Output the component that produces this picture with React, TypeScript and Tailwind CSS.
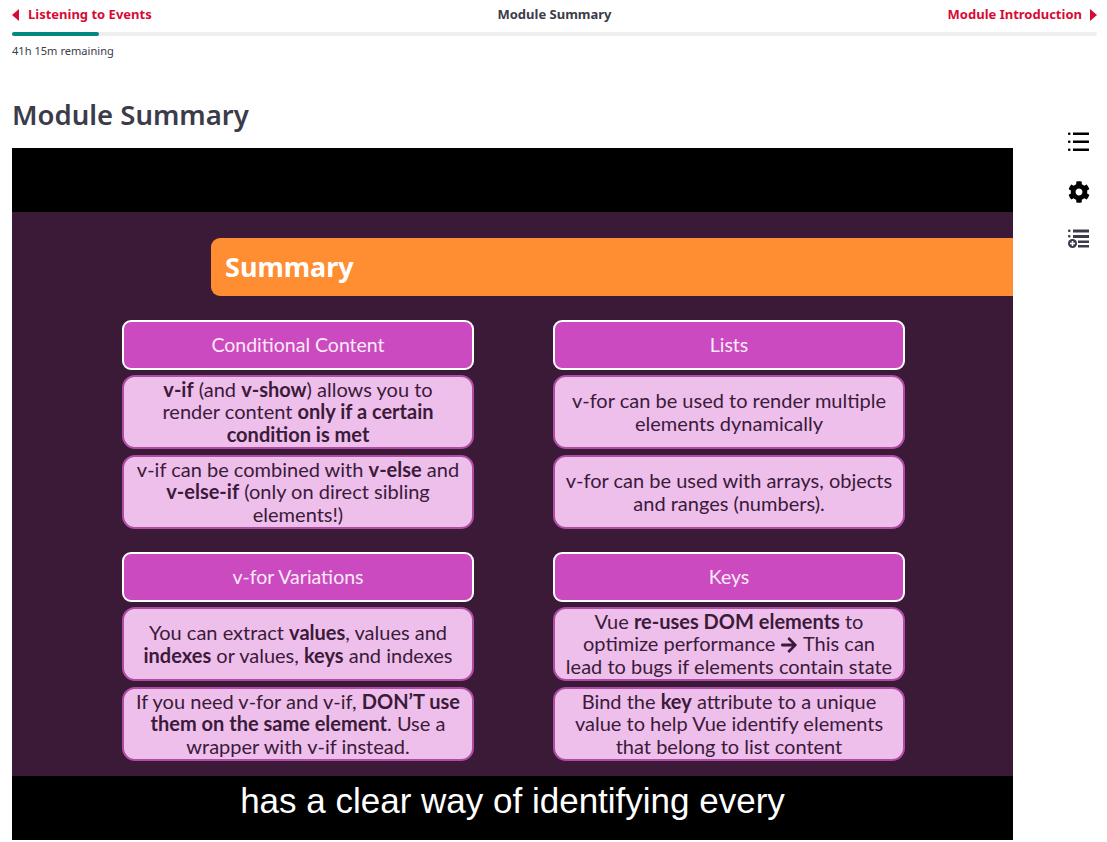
import React from "react";
import { FaCog, FaArrowRight } from "react-icons/fa";

const ui = { fontFamily: '"Noto Sans", "Open Sans", sans-serif' };
const slide = { fontFamily: 'Lato, "Noto Sans", sans-serif' };

function Tri({ dir }: { dir: "l" | "r" }) {
  return (
    <svg width="7" height="12" viewBox="0 0 7 12" className="shrink-0">
      <path d={dir === "l" ? "M7 0V12L0 6Z" : "M0 0V12L7 6Z"} fill="#d70a34" />
    </svg>
  );
}

function Head({ children }: { children: React.ReactNode }) {
  return (
    <div className="h-[50px] rounded-[9px] border-[2px] border-white bg-[#cb4abf] text-[#fbeafa] text-[19.5px] flex items-center justify-center">
      {children}
    </div>
  );
}

function Card({ children }: { children: React.ReactNode }) {
  return (
    <div className="h-[74px] rounded-[13px] border-[2px] border-[#b04ba6] bg-[#edbfea] text-[#3b1a3a] text-[20px] leading-[22.5px] flex items-center justify-center text-center px-1 pb-[1px]">
      <div>{children}</div>
    </div>
  );
}

function Group({ title, a, b }: { title: string; a: React.ReactNode; b: React.ReactNode }) {
  return (
    <div className="flex flex-col">
      <Head>{title}</Head>
      <div className="mt-[5px]">
        <Card>{a}</Card>
      </div>
      <div className="mt-[6px]">
        <Card>{b}</Card>
      </div>
    </div>
  );
}

export default function App() {
  return (
    <div className="w-[1107px] h-[842px] bg-white overflow-hidden flex flex-col pl-3 pr-[10px]" style={ui}>
      <div className="h-[29px] grid grid-cols-3 items-center text-[13px] font-bold">
        <div className="flex items-center gap-[9px] text-[#d70a34]">
          <Tri dir="l" />
          <span>Listening to Events</span>
        </div>
        <span className="text-[#3c3b4a] justify-self-center">Module Summary</span>
        <div className="flex items-center justify-end gap-[8px] text-[#d70a34]">
          <span>Module Introduction</span>
          <Tri dir="r" />
        </div>
      </div>
      <div className="mt-[3px] h-1 bg-[#eeeeee] rounded-full">
        <div className="h-1 w-[87px] bg-[#00897f] rounded-full" />
      </div>
      <div className="mt-[7px] h-[16px] leading-[16px] text-[11.1px] text-[#3c3b4a]">41h 15m remaining</div>
      <h1 className="mt-[36px] h-[40px] leading-[40px] text-[27.5px] font-semibold text-[#3c3b4a]">Module Summary</h1>
      <div className="mt-[13px] flex">
        <div className="w-[1001px] h-[692px] bg-black flex flex-col shrink-0">
          <div className="h-[64px]" />
          <div className="h-[564px] bg-[#3b1a38] pt-[26px] flex flex-col overflow-hidden" style={slide}>
            <div className="ml-[199px] h-[58px] bg-[#ff8d31] rounded-l-[9px] flex items-center pl-[14px] text-white text-[27px] font-bold" style={ui}>
              Summary
            </div>
            <div className="mt-[24px] ml-[110px] w-[783px] grid grid-cols-2 gap-x-[79px] gap-y-[23px]">
              <Group
                title="Conditional Content"
                a={<><b>v-if</b> (and <b>v-show</b>) allows you to<br />render content <b>only if a certain<br />condition is met</b></>}
                b={<>v-if can be combined with <b>v-else</b> and<br /><b>v-else-if</b> (only on direct sibling<br />elements!)</>}
              />
              <Group
                title="Lists"
                a={<>v-for can be used to render multiple<br />elements dynamically</>}
                b={<>v-for can be used with arrays, objects<br />and ranges (numbers).</>}
              />
              <Group
                title="v-for Variations"
                a={<>You can extract <b>values</b>, values and<br /><b>indexes</b> or values, <b>keys</b> and indexes</>}
                b={<>If you need v-for and v-if, <b>DON’T use<br />them on the same element</b>. Use a<br />wrapper with v-if instead.</>}
              />
              <Group
                title="Keys"
                a={<>Vue <b>re-uses DOM elements</b> to<br />optimize performance <FaArrowRight className="inline align-[-3px]" size={18} /> This can<br />lead to bugs if elements contain state</>}
                b={<>Bind the <b>key</b> attribute to a unique<br />value to help Vue identify elements<br />that belong to list content</>}
              />
            </div>
          </div>
          <div
            className="h-[64px] flex items-start justify-center text-white text-[35px] leading-[50px]"
            style={{ fontFamily: '"Liberation Sans", Arial, sans-serif' }}
          >
            has a clear way of identifying every
          </div>
        </div>
        <div className="ml-[55px] -mt-4 flex flex-col items-start">
          <svg width="21" height="19" viewBox="0 0 21 19">
            <g fill="#000">
              <rect x="0" y="0.5" width="2.5" height="2.5" rx="1" />
              <rect x="0" y="8.5" width="2.5" height="2.5" rx="1" />
              <rect x="0" y="16.5" width="2.5" height="2.5" rx="1" />
              <rect x="5" y="0.5" width="16" height="2.5" />
              <rect x="5" y="8.5" width="16" height="2.5" />
              <rect x="5" y="16.5" width="16" height="2.5" />
            </g>
          </svg>
          <FaCog className="mt-[30px] text-black" size={22} />
          <svg width="21" height="19" viewBox="0 0 21 19" className="mt-[26px]">
            <g fill="#3c3b4a">
              <rect x="0" y="0.5" width="2.5" height="2.5" rx="1" />
              <rect x="0" y="6" width="2.5" height="2.5" rx="1" />
              <rect x="5" y="0.5" width="16" height="3" />
              <rect x="5" y="6" width="16" height="3" />
              <rect x="10" y="11.5" width="11" height="2.5" />
              <rect x="10" y="16" width="11" height="2.5" />
              <circle cx="4.5" cy="14.5" r="4.5" />
            </g>
            <path d="M2 14.5H7M4.5 12V17" stroke="#fff" strokeWidth="1.5" />
          </svg>
        </div>
      </div>
    </div>
  );
}
